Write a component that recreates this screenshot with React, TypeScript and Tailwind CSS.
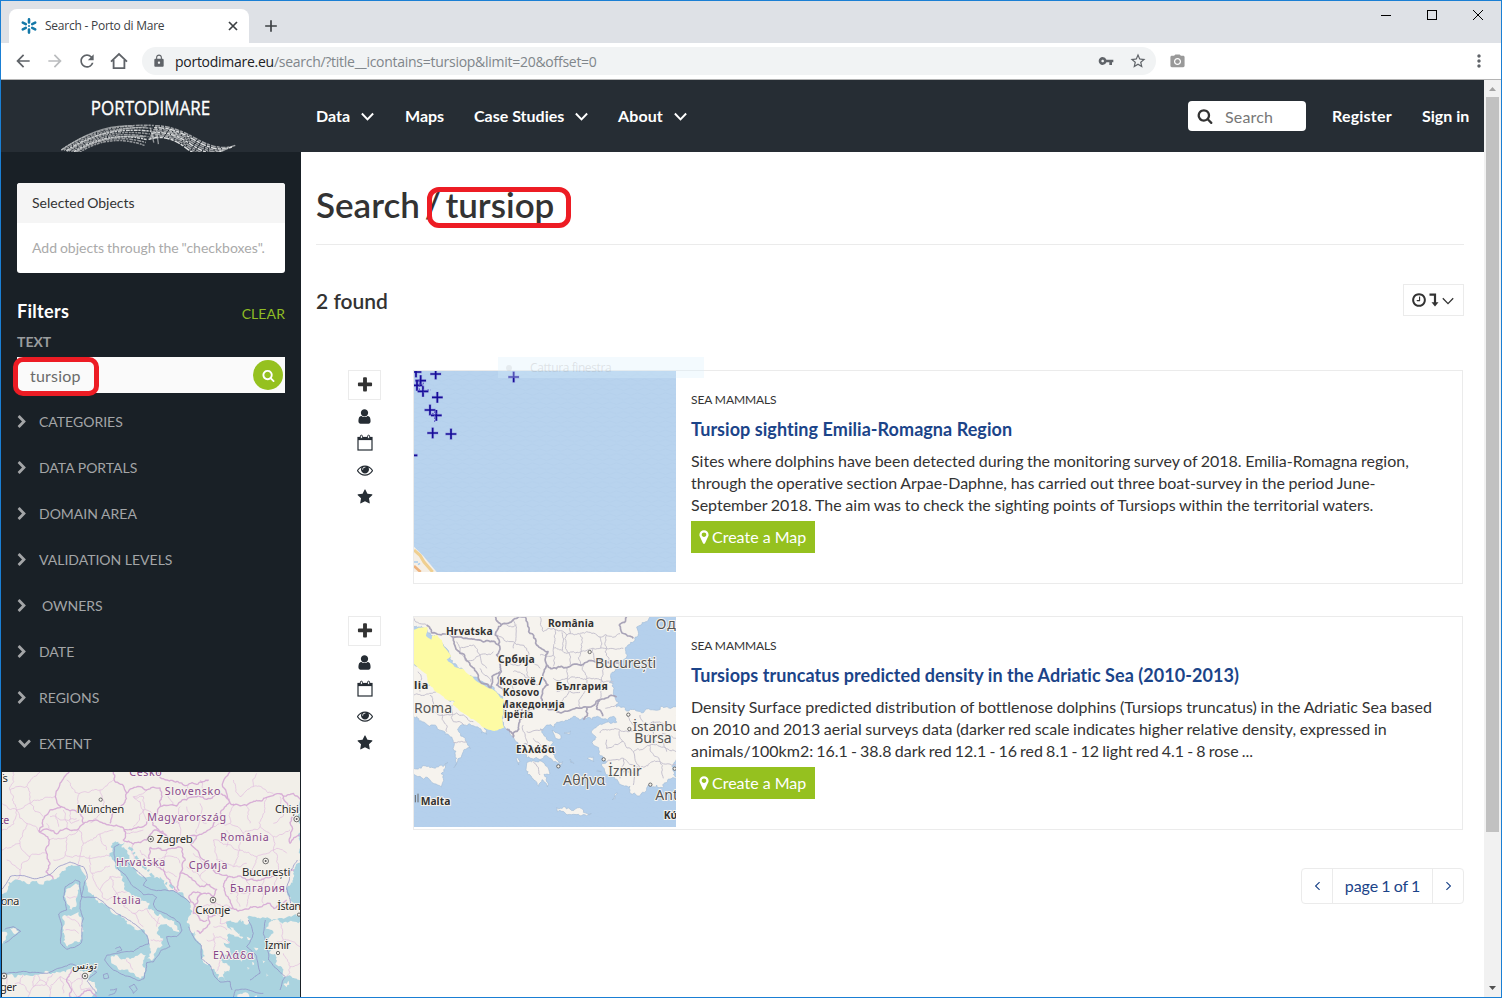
import React from "react";
import {
  MdAdd,
  MdArrowBack,
  MdArrowForward,
  MdLock,
  MdMoreVert,
  MdPhotoCamera,
  MdRefresh,
  MdStarBorder,
  MdVpnKey,
} from "react-icons/md";

/* ---------- icon glyphs ---------- */

const GLYPHS = {
  plus: "M1600 736v192q0 40-28 68t-68 28h-416v416q0 40-28 68t-68 28h-192q-40 0-68-28t-28-68v-416h-416q-40 0-68-28t-28-68v-192q0-40 28-68t68-28h416v-416q0-40 28-68t68-28h192q40 0 68 28t28 68v416h416q40 0 68 28t28 68z",
  user: "M1536 1399q0 109-62.5 187t-150.5 78h-854q-88 0-150.5-78t-62.5-187q0-85 8.5-160.5t31.5-152 58.5-131 94-89 134.5-34.5q131 128 313 128t313-128q76 0 134.5 34.5t94 89 58.5 131 31.5 152 8.5 160.5zm-256-887q0 159-112.5 271.5t-271.5 112.5-271.5-112.5-112.5-271.5 112.5-271.5 271.5-112.5 271.5 112.5 112.5 271.5z",
  eye: "M1664 960q-152-236-381-353 61 104 61 225 0 185-131.5 316.5t-316.5 131.5-316.5-131.5-131.5-316.5q0-121 61-225-229 117-381 353 133 205 333.5 326.5t434.5 121.5 434.5-121.5 333.5-326.5zm-720-384q0-20-14-34t-34-14q-125 0-214.5 89.5t-89.5 214.5q0 20 14 34t34 14 34-14 14-34q0-86 61-147t147-61q20 0 34-14t14-34zm848 384q0 34-20 69-140 230-376.5 368.5t-499.5 138.5-499.5-139-376.5-368q-20-35-20-69t20-69q140-229 376.5-368t499.5-139 499.5 139 376.5 368q20 35 20 69z",
  search:
    "M1216 832q0-185-131.5-316.5t-316.5-131.5-316.5 131.5-131.5 316.5 131.5 316.5 316.5 131.5 316.5-131.5 131.5-316.5zm512 832q0 52-38 90t-90 38q-54 0-90-38l-343-342q-179 124-399 124-143 0-273.5-55.5t-225-150-150-225-55.5-273.5 55.5-273.5 150-225 225-150 273.5-55.5 273.5 55.5 225 150 150 225 55.5 273.5q0 220-124 399l343 343q37 37 37 90z",
  chevron:
    "M1363 877l-742 742q-19 19-45 19t-45-19l-166-166q-19-19-19-45t19-45l531-531-531-531q-19-19-19-45t19-45l166-166q19-19 45-19t45 19l742 742q19 19 19 45t-19 45z",
  star: "M1728 647q0 22-26 48l-363 354 86 500q1 7 1 20 0 21-10.5 35.5t-30.5 14.5q-19 0-40-12l-449-236-449 236q-22 12-40 12-21 0-31.5-14.5t-10.5-35.5q0-6 2-20l86-500-364-354q-25-27-25-48 0-37 56-46l502-73 225-455q19-41 49-41t49 41l225 455 502 73q56 9 56 46z",
  clock:
    "M1024 544v448q0 14-9 23t-23 9h-320q-14 0-23-9t-9-23v-64q0-14 9-23t23-9h224v-352q0-14 9-23t23-9h64q14 0 23 9t9 23zm416 352q0-148-73-273t-198-198-273-73-273 73-198 198-73 273 73 273 198 198 273 73 273-73 198-198 73-273zm224 0q0 209-103 385.5t-279.5 279.5-385.5 103-385.5-103-279.5-279.5-103-385.5 103-385.5 279.5-279.5 385.5-103 385.5 103 279.5 279.5 103 385.5z",
  marker:
    "M1152 640q0-106-75-181t-181-75-181 75-75 181 75 181 181 75 181-75 75-181zm256 0q0 109-33 179l-364 774q-16 33-47.5 52t-67.5 19-67.5-19-46.5-52l-365-774q-33-70-33-179 0-212 150-362t362-150 362 150 150 362z",
};

function Glyph({ name, className }: { name: keyof typeof GLYPHS; className?: string }) {
  return (
    <svg viewBox="0 0 1792 1792" fill="currentColor" className={className}>
      <path d={GLYPHS[name]} />
    </svg>
  );
}

function CalendarIcon({ className }: { className?: string }) {
  return (
    <svg viewBox="0 0 16 17" fill="none" stroke="currentColor" className={className}>
      <rect x="1" y="3.5" width="14" height="12.5" strokeWidth="1.2" />
      <path d="M1 4.8h14" strokeWidth="2.6" />
      <rect x="3.4" y="1.2" width="2" height="3.4" rx="1" fill="#fff" strokeWidth="1" />
      <rect x="10.6" y="1.2" width="2" height="3.4" rx="1" fill="#fff" strokeWidth="1" />
    </svg>
  );
}

function AngleDown({ className, width = 2 }: { className?: string; width?: number }) {
  return (
    <svg viewBox="0 0 12 8" fill="none" stroke="currentColor" strokeWidth={width} className={className}>
      <path d="M0.8 1.2 6 6.6 11.2 1.2" />
    </svg>
  );
}

/* ---------- map geometry ---------- */

type Pt = [number, number];

function parse(src: string): Pt[] {
  return src.split(" ").map((p) => p.split(",").map(Number) as Pt);
}

function noise(a: number, b: number) {
  const s = Math.sin(a * 12.9898 + b * 78.233) * 43758.5453;
  return s - Math.floor(s) - 0.5;
}

function split(a: Pt, b: Pt, amount: number): Pt[] {
  const len = Math.hypot(b[0] - a[0], b[1] - a[1]);
  if (len < 7 || len > 400) return [b];
  const k = (noise(a[0] + b[0], a[1] + b[1]) * amount * Math.min(len, 36)) / len;
  const mid: Pt = [
    (a[0] + b[0]) / 2 - (b[1] - a[1]) * k,
    (a[1] + b[1]) / 2 + (b[0] - a[0]) * k,
  ];
  return [...split(a, mid, amount), ...split(mid, b, amount)];
}

function rough(src: string, amount = 0.45, close = false) {
  const pts = parse(src);
  const out: Pt[] = [pts[0]];
  for (let i = 1; i < pts.length; i++) out.push(...split(pts[i - 1], pts[i], amount));
  return "M" + out.map((p) => p[0].toFixed(1) + " " + p[1].toFixed(1)).join("L") + (close ? "Z" : "");
}

function Lines({ items, stroke, width, opacity = 1, amount = 0.4 }: { items: string[]; stroke: string; width: number; opacity?: number; amount?: number }) {
  return (
    <path d={items.map((s) => rough(s, amount)).join("")} fill="none" stroke={stroke} strokeWidth={width} opacity={opacity} strokeLinejoin="round" />
  );
}

function Land({ items, fill, stroke = "none" }: { items: string[]; fill: string; stroke?: string }) {
  return <path d={items.map((s) => rough(s, 0.6, true)).join("")} fill={fill} stroke={stroke} strokeWidth={2} />;
}

type LabelSpec = { t: string; x: number; y: number; w: number; size?: number; bold?: boolean; color?: string };

function Label({ t, x, y, w, size = 34, bold, color = "#2b2b2b" }: LabelSpec) {
  return (
    <text
      x={x}
      y={y}
      fontSize={size}
      textLength={w}
      fontWeight={bold ? 700 : 400}
      fill={color}
      stroke="#f6f3ee"
      strokeWidth={6}
      strokeLinejoin="round"
      paintOrder="stroke"
      className="font-['Noto_Sans','DejaVu_Sans',sans-serif]"
    >
      {t}
    </text>
  );
}

function Town({ x, y, capital }: { x: number; y: number; capital?: boolean }) {
  return (
    <g fill="#f6f3ee" stroke="#555" strokeWidth={2.5}>
      <circle cx={x} cy={y} r={capital ? 8.5 : 5} />
      {capital && <circle cx={x} cy={y} r={3} fill="#555" stroke="none" />}
    </g>
  );
}

const EXTENT_LAND = [
  "0,30 906,30 906,288 887,318 882,350 864,378 862,405 875,425 906,440 906,466 868,468 845,474 815,484 796,474 765,470 742,472 745,492 722,478 700,486 682,484 690,506 715,520 705,532 682,524 690,548 668,548 690,568 704,590 690,592 668,580 662,600 690,622 688,636 672,632 680,664 664,650 656,660 644,634 630,612 606,600 610,575 598,548 584,524 568,508 566,470 572,436 556,414 528,396 490,366 450,350 410,332 388,300 376,268 364,262 374,246 346,244 332,258 326,290 344,318 362,340 374,380 394,408 420,424 448,428 440,446 462,458 505,480 532,500 538,516 520,512 500,492 478,498 470,520 490,536 488,556 470,568 456,602 442,596 452,566 446,540 426,508 400,500 374,476 346,464 312,432 286,412 264,388 258,352 242,326 205,318 184,336 160,358 130,374 90,372 52,360 24,368 14,398 0,400",
  "228,370 234,400 228,440 214,450 200,430 196,400 210,384",
  "236,456 245,480 240,545 220,548 202,560 190,545 194,490 188,468 212,468",
  "332,590 352,586 390,598 438,586 428,618 432,646 420,656 392,638 352,622 334,610",
  "0,650 60,646 112,644 165,640 206,628 226,624 240,632 262,634 276,640 268,662 288,684 270,716 0,716",
  "906,486 862,488 835,480 806,490 798,506 820,520 804,538 824,556 808,578 830,592 826,612 846,622 850,650 906,656",
  "6,515 22,520 18,538 6,552",
  "30,504 50,504 56,516 40,520",
  "712,704 730,698 770,706 770,716 712,716",
  "582,514 592,526 600,540 590,532",
  "720,478 728,480 724,486",
  "760,560 775,564 768,572",
  "756,606 762,608 758,616",
  "788,600 796,604 790,610",
  "850,672 866,662 860,682",
  "740,530 752,536 744,540",
  "690,500 706,512 730,532 724,536 700,520",
  "720,596 728,600 724,606",
  "742,620 750,624 744,630",
  "800,640 808,646 800,650",
];

const EXTENT_BORDERS = [
  "208,36 180,70 166,110 184,140 150,150 128,180 116,214",
  "116,214 148,210 170,222 196,206 234,208 250,192 238,160 216,150 184,140",
  "116,214 148,240 140,280 150,310 138,336 160,358",
  "250,192 300,186 340,198 372,208 430,200 440,186",
  "340,36 380,100 372,130 352,150 336,170 330,190",
  "380,100 420,80 440,90 480,84 486,110 480,140 456,180 440,186",
  "372,208 370,240 400,252 440,240 470,210 500,228",
  "480,140 530,138 570,112 620,118 660,100 690,128 650,180 625,210 590,228 540,240 500,228 470,204 456,180",
  "690,128 668,80 690,36",
  "690,128 740,136 800,112 850,108 880,150 876,200 870,250 900,225",
  "850,108 880,100 900,118",
  "590,228 572,250 600,290 640,330 685,350 740,360 800,352 862,336 882,330",
  "450,262 500,270 546,264 556,300 540,340 538,392",
  "450,262 446,286 470,320 510,360 532,396",
  "540,340 570,352 600,380 620,372 650,388 640,410 606,402 580,396 566,410",
  "685,350 670,380 690,420 700,446 760,440 810,430 822,446 860,420",
  "700,446 660,456 626,470 622,500 600,520 590,512",
  "566,410 584,438 606,402",
  "626,470 606,440 584,438 580,460 600,480 622,480",
  "626,60 560,76 500,60 470,36",
  "290,711 270,690 210,711 215,690 200,660 214,628",
];

const EXTENT_REGIONS = [
  "6,130 50,150 90,130 130,170", "40,36 30,90 50,150 30,200 6,210", "50,150 80,190 116,214",
  "80,190 60,250 90,290 140,280", "6,270 60,250", "20,300 60,330 90,290", "60,330 52,360",
  "90,130 80,80 120,36", "80,80 30,90", "90,130 166,110", "200,60 240,100 230,150",
  "240,100 300,90 340,60", "300,90 310,140 270,190", "148,240 200,232 236,208", "200,232 196,284 160,300",
  "196,284 240,288 330,284", "236,208 250,250 240,288", "250,250 300,222 340,210", "300,222 320,270",
  "240,288 232,316", "270,286 276,340 330,318", "276,340 300,390 330,350 362,352", "330,350 350,400 380,396",
  "300,390 320,420 350,400", "350,400 372,440 410,424", "372,440 400,460 440,446", "400,460 430,500",
  "440,446 480,490", "480,470 470,500", "452,540 488,540", "380,598 400,630",
  "400,110 430,150 400,200", "430,150 456,160", "400,110 440,90", "500,100 520,138",
  "560,76 560,112", "600,60 610,116", "560,140 580,180 620,190", "520,190 560,180", "540,140 540,240",
  "500,170 540,190", "600,130 590,220", "700,130 690,190 730,220 780,200 820,230 870,210",
  "740,136 750,190", "800,112 780,200", "690,190 640,200", "730,220 720,270 770,290 820,270 860,280",
  "640,240 720,270 700,320", "770,290 760,356", "820,230 820,270 830,340", "640,240 650,300 700,320 740,310",
  "680,210 680,260", "840,110 850,160 820,190", "700,60 720,110 760,80 820,100", "760,80 770,40",
  "470,300 520,290 540,310", "500,270 490,330 530,350", "580,280 620,310 600,350", "620,310 650,330",
  "560,320 600,350 620,370", "700,360 720,440", "740,360 750,400 740,440", "790,356 790,430", "830,350 830,400",
  "690,400 750,400 860,395", "606,440 650,430 690,440", "640,410 650,456", "640,500 680,510",
  "620,540 660,530 690,548", "640,520 640,580", "650,456 660,490 680,484", "590,420 600,402",
  "660,600 650,634", "840,490 850,540 900,560", "850,540 820,560", "850,580 870,620 900,610", "870,620 860,650",
  "20,650 30,690 60,670 90,700 120,660 150,690 180,650 214,670 250,650",
  "60,670 70,644", "120,660 112,644", "150,690 150,711", "90,700 84,711", "180,650 190,700",
  "214,670 230,711", "240,640 244,690 280,690", "30,690 6,690", "105,644 100,680 140,670 160,642",
  "170,160 176,200", "190,150 200,204", "210,152 214,190 238,180", "150,170 180,180 230,176", "140,190 160,212",
  "200,470 240,500", "196,510 236,520", "200,410 230,410", "440,180 430,110 400,110", "376,220 430,210",
  "400,252 396,280 440,330", "420,270 460,310",
];

const SEA_LIMITS = [
  "6,388 30,350 60,346 110,356 150,344 180,318 210,306 250,320 262,352 250,380 244,410 290,412 340,450 400,490 440,526 446,552 420,560 400,575 370,576",
  "196,380 226,360 240,366 246,410 240,446 250,476 244,548 224,562 200,568 182,550 186,500 176,462 200,450 190,410 196,380",
  "370,576 350,580 320,586 314,600 340,630 390,650 416,662 432,656 440,608 460,606 484,570 510,560 500,530 530,530 546,510 540,490 500,462 470,450 460,432 470,412 458,404 430,404 400,380 380,350 356,330 344,300 342,262 358,252",
  "372,300 420,340 440,360 430,376 470,392 520,392 560,418 570,430",
  "566,500 586,540 604,556 604,596 632,618 644,650 660,666 690,664 696,690",
  "6,640 70,634 140,640 200,618 212,612 250,622 290,636 270,652 262,664 290,700",
  "346,566 360,560 366,570 350,576",
  "310,644 322,640 326,654 312,656 310,644",
  "388,680 402,672 412,688 400,700 388,680",
  "330,690 350,686 344,700 326,706",
  "700,711 706,690 740,688 790,700",
  "892,300 874,330 868,360 860,384 872,430",
  "796,480 790,520 800,560 806,600 834,630 856,650 840,690",
  "745,480 760,520 740,560 770,590 780,640 750,660",
  "14,508 40,500 62,514 40,530 14,550",
];

function ExtentMap() {
  return (
    <svg viewBox="6 36 894 675" className="block h-[225px] w-[298px]">
      <rect x="0" y="0" width="910" height="720" fill="#aad3df" />
      <Land items={EXTENT_LAND} fill="#f2efe9" />
      <Lines items={EXTENT_REGIONS} stroke="#e2bfe0" width={2.2} />
      <Lines items={EXTENT_BORDERS} stroke="#d3a3d3" width={4} opacity={0.85} />
      <Lines items={SEA_LIMITS} stroke="#8f8fc6" width={3} opacity={0.75} amount={0.15} />
      <path d={rough("386,262 408,290 430,320 480,356 520,384", 0.3)} fill="none" stroke="#aad3df" strokeWidth={8} strokeDasharray="16 6 5 8" />
      <Town x={302} y={119} />
      <Town x={452} y={237} capital />
      <Town x={797} y={303} capital />
      <Town x={639} y={420} capital />
      <Town x={890} y={177} capital />
      <Town x={255} y={648} capital />
      <Town x={12} y={648} capital />
      <Town x={834} y={579} />
      <Town x={897} y={464} />
      <Label t="Česko" x={388} y={49} w={97} color="#86478a" size={32} />
      <Label t="Slovensko" x={494} y={106} w={167} color="#86478a" size={32} />
      <Label t="Magyarország" x={442} y={183} w={236} color="#86478a" size={32} />
      <Label t="România" x={661} y={242} w={145} color="#86478a" size={32} />
      <Label t="Hrvatska" x={348} y={318} w={148} color="#86478a" size={32} />
      <Label t="Србија" x={566} y={327} w={116} color="#86478a" size={32} />
      <Label t="България" x={690} y={396} w={165} color="#86478a" size={32} />
      <Label t="Italia" x={338} y={431} w={84} color="#86478a" size={32} />
      <Label t="Ελλάδα" x={639} y={596} w={122} color="#86478a" size={32} />
      <Label t="ce" x={-4} y={192} w={32} color="#86478a" size={32} />
      <Label t="München" x={230} y={159} w={143} />
      <Label t="Zagreb" x={470} y={250} w={108} />
      <Label t="București" x={726} y={348} w={145} />
      <Label t="Скопје" x={586} y={462} w={105} />
      <Label t="Chiși" x={825} y={159} w={72} />
      <Label t="İstan" x={832} y={451} w={72} />
      <Label t="İzmir" x={794} y={567} w={78} />
      <Label t="is" x={6} y={66} w={18} />
      <Label t="ona" x={2} y={434} w={56} />
      <Label t="ger" x={0} y={692} w={50} />
      <Label t="تونس" x={216} y={628} w={76} size={32} />
    </svg>
  );
}

const CROSSES: Pt[] = [
  [228, 66], [287, 72], [242, 92], [231, 106], [249, 124], [292, 142],
  [270, 180], [289, 196], [278, 249], [333, 252], [521, 81], [216, 316],
];

function SightingMap() {
  return (
    <svg viewBox="222 63 786 603" className="block h-[201px] w-[262px]">
      <defs>
        <pattern id="ripples" width="42" height="28" patternUnits="userSpaceOnUse">
          <path d="M0 6q10 7 21 0t21 0M-21 20q10 7 21 0t21 0 21 0" fill="none" stroke="#b0cce9" strokeWidth="2" />
        </pattern>
      </defs>
      <rect x="222" y="63" width="786" height="603" fill="#b8d3ee" />
      <rect x="222" y="63" width="786" height="603" fill="url(#ripples)" opacity="0.7" />
      <path d="M222 590 250 618 290 666H222Z" fill="#f5efe6" />
      <path d="M222 600 240 616 252 636 278 666" fill="none" stroke="#efcf90" strokeWidth="9" />
      <path d="M222 648 242 666" stroke="#eeb27c" strokeWidth="8" />
      <path d="M222 636h12M234 644l6-4" stroke="#a9cdee" strokeWidth="5" />
      {CROSSES.map(([x, y]) => (
        <g key={x + "-" + y} fill="none">
          <path d={`M${x - 17} ${y}h34M${x} ${y - 17}v34`} stroke="#8b86dd" strokeWidth="9" opacity="0.55" />
          <path d={`M${x - 16} ${y}h32M${x} ${y - 16}v32`} stroke="#160c98" strokeWidth="5" />
        </g>
      ))}
      <path d="M238 88v36M250 98v30M262 120h10M284 184v34M276 190h16" stroke="#5a50c0" strokeWidth="3" strokeDasharray="5 4" />
    </svg>
  );
}

const DENSITY_LAND = [
  "216,30 930,30 914,52 890,66 894,92 872,112 856,128 862,150 850,166 826,196 808,232 822,250 820,272 836,292 830,306 860,318 905,324 950,316 1014,286 1014,530 985,522 968,548 950,540 925,540 916,560 890,572 872,566 870,544 838,538 820,516 796,504 784,480 800,470 780,452 776,428 756,412 764,392 756,376 790,356 830,352 812,336 790,342 772,334 756,344 740,340 700,334 676,346 650,352 644,366 620,360 600,372 612,392 640,414 634,428 610,422 640,448 668,470 660,484 640,470 604,462 572,460 552,444 534,426 524,404 510,386 494,366 488,330 490,296 470,262 440,236 400,216 350,180 330,150 300,110 276,92 262,80 244,64 216,70",
  "216,170 262,200 270,230 300,262 330,290 352,300 394,318 420,344 432,366 440,388 424,384 404,364 372,360 356,380 376,400 392,430 370,440 352,472 342,488 346,450 340,410 316,388 280,360 258,356 216,324",
  "216,488 250,482 290,486 324,472 310,520 304,546 282,536 240,514 216,510",
  "560,476 590,470 620,484 630,506 612,508 620,530 622,546 606,524 596,544 576,520 558,494",
  "650,608 690,612 730,622 754,626 740,632 700,628 652,620",
  "672,384 692,378 690,388", "742,460 760,456 762,470", "690,462 702,476 692,470",
  "816,584 832,564 826,580", "702,512 716,520 706,526", "636,376 656,386 662,402 644,392",
  "528,460 540,468 536,480", "770,498 784,500", "756,532 770,528 762,536",
];

const DENSITY_BORDERS = [
  "260,60 276,84 320,88 338,96 342,116 372,148 404,196 430,236 452,250 456,214 480,200",
  "338,96 390,102 450,110 476,120 470,150 484,200 470,240 492,262",
  "476,120 466,90 484,60 466,36", "484,60 520,44 556,36",
  "556,36 566,80 590,120 624,140 620,180 680,188 730,178 780,168 846,172",
  "620,180 610,220 624,240 606,270 610,296 650,320 700,312 740,306 780,284 830,276",
  "610,296 560,320 540,344 520,396 500,372", "540,344 548,310 492,296", "740,306 742,332 730,344",
  "860,36 838,60 846,84 880,100", "780,284 770,312 788,334",
];

const DENSITY_REGIONS = [
  "470,90 520,110 560,130", "520,44 528,90 520,130", "476,160 520,180 560,170 600,190", "560,130 560,170 570,220",
  "600,36 610,80 640,70 680,90 740,80 780,96 840,86", "640,70 640,130 700,140 760,130 850,130", "680,90 690,180",
  "720,88 724,138", "724,138 720,180", "760,130 770,170", "800,90 800,130 810,170", "640,130 640,184", "666,82 668,136",
  "780,96 782,130", "700,40 690,88", "350,110 360,130 400,120 420,150 460,140", "360,130 380,170 420,150 440,190",
  "420,190 452,230", "640,220 700,216 760,220 820,230", "680,188 690,250 660,300", "730,178 740,250 720,306",
  "790,170 780,280", "650,260 720,262", "222,230 270,240", "222,270 290,260", "270,270 280,320 330,330 370,330 400,350",
  "310,320 320,380", "336,300 340,350 372,360", "234,200 240,260", "340,412 380,410",
  "550,360 560,420", "560,380 610,376", "544,420 600,430", "580,400 620,440", "580,470 600,510",
  "860,330 880,360 940,350 1008,370", "780,384 840,376 900,390 1008,400", "800,430 850,410 880,440 930,420 1008,440",
  "850,410 840,376", "800,470 850,460 900,490 960,470 1008,480", "880,440 900,490 880,540", "930,420 960,470 970,520",
  "850,460 840,520", "800,404 800,430", "940,350 950,410", "840,500 900,510", "520,200 570,220 600,240", "516,230 520,270",
  "500,60 530,60", "222,40 260,60", "600,150 640,150", "900,330 910,350", "796,310 830,300", "960,400 980,440",
];

function DensityMap() {
  return (
    <svg viewBox="222 36 786 630" className="block h-[210px] w-[262px]">
      <rect x="222" y="36" width="786" height="630" fill="#b5d0ec" />
      <rect x="222" y="36" width="786" height="630" fill="url(#ripples)" opacity="0.4" />
      <Land items={DENSITY_LAND} fill="#f6f3ee" stroke="#a3bcd8" />
      <Lines items={DENSITY_REGIONS} stroke="#c6c2cf" width={3} />
      <Lines items={DENSITY_BORDERS} stroke="#a9a4b8" width={5} />
      <Town x={749} y={141} />
      <Town x={865} y={329} />
      <Town x={868} y={372} />
      <Town x={791} y={463} />
      <Town x={655} y={484} />
      <Town x={931} y={539} />
      <Town x={1004} y={491} />
      <Label t="Hrvatska" x={318} y={91} w={140} size={31} bold color="#333" />
      <Label t="România" x={624} y={66} w={138} size={31} bold color="#333" />
      <Label t="Србија" x={474} y={173} w={110} size={31} bold color="#333" />
      <Label t="Kosovë /" x={478} y={240} w={130} size={30} bold color="#333" />
      <Label t="Kosovo" x={488} y={272} w={110} size={30} bold color="#333" />
      <Label t="България" x={647} y={255} w={156} size={31} bold color="#333" />
      <Label t="Македонија" x={478} y={310} w={196} size={30} bold color="#333" />
      <Label t="ipëria" x={492} y={339} w={88} size={30} bold color="#333" />
      <Label t="Ελλάδα" x={528} y={445} w={116} size={31} bold color="#333" />
      <Label t="Malta" x={242} y={599} w={89} size={31} bold color="#333" />
      <Label t="Κύ" x={971} y={643} w={40} size={31} bold color="#333" />
      <Label t="lia" x={222} y={252} w={43} size={34} bold color="#333" />
      <Label t="București" x={765} y={189} w={183} size={42} color="#555" />
      <Label t="Од" x={947} y={71} w={60} size={42} color="#555" />
      <Label t="Roma" x={222} y={323} w={114} size={42} color="#555" />
      <Label t="İstanbu" x={878} y={378} w={144} size={40} color="#555" />
      <Label t="Bursa" x={883} y={414} w={112} size={42} color="#555" />
      <Label t="İzmir" x={805} y={513} w={100} size={41} color="#555" />
      <Label t="Αθήνα" x={669} y={541} w={127} size={42} color="#555" />
      <Label t="Ant" x={946} y={585} w={68} size={42} color="#555" />
      <path d="M226 570v22M234 566v26" stroke="#666" strokeWidth="3" />
      <path
        d={rough("222,74 262,66 262,78 258,92 274,104 276,92 292,90 306,106 312,126 334,154 320,164 344,186 372,194 400,218 424,238 456,252 478,274 492,284 488,350 492,368 464,378 440,372 420,358 390,340 362,320 338,300 344,288 316,282 290,262 268,240 260,208 222,176", 0.2, true)}
        fill="#fdfba4"
      />
    </svg>
  );
}

/* ---------- brand ---------- */

function lerp(a: number, b: number, t: number) {
  return a + (b - a) * t;
}

const WAVE_LEFT = Array.from({ length: 8 }, (_, i) => {
  const t = i / 7;
  return `M${lerp(183, 236, t)} ${lerp(450, 458, t)}Q${lerp(300, 330, t)} ${lerp(368, 398, t)} ${lerp(462, 434, t)} ${lerp(376, 436, t)}`;
});

const WAVE_RIGHT = Array.from({ length: 8 }, (_, i) => {
  const t = i / 7;
  return `M${lerp(466, 446, t)} ${lerp(377, 418, t)}Q${lerp(520, 500, t)} ${lerp(376, 398, t)} ${lerp(590, 560, t)} ${lerp(416, 444, t)}T${lerp(708, 640, t)} ${lerp(436, 462, t)}`;
});

function BrandLogo() {
  return (
    <svg viewBox="180 290 535 166" className="block h-[55px] w-[178px]">
      <text x="272" y="345" fontSize="59" textLength="360" lengthAdjust="spacingAndGlyphs" fill="#fff" stroke="#fff" strokeWidth="1" className="font-['Open_Sans',sans-serif] font-normal">
        PORTODIMARE
      </text>
      <g fill="none" strokeWidth="4.6">
        {WAVE_LEFT.map((d, i) => (
          <path key={d} d={d} stroke={i % 3 === 2 ? "#d2d4d5" : "#989b9e"} strokeDasharray={i % 2 ? "9 3 6 2" : "12 2 7 3"} />
        ))}
        {WAVE_RIGHT.map((d, i) => (
          <path key={d} d={d} stroke={i % 3 === 1 ? "#dcdedf" : "#a0a3a6"} strokeDasharray={i % 2 ? "10 3 18 3" : "15 3 9 3"} />
        ))}
      </g>
      <g fill="none" stroke="#c2c4c6" strokeWidth="4" opacity="0.7">
        <path d="M183 450Q300 368 400 378M200 454Q300 384 440 380M225 456Q310 400 434 410M520 388 545 420M505 384 532 416M468 378 476 432M452 384 462 428" />
      </g>
    </svg>
  );
}

/* ---------- browser chrome ---------- */

function Favicon() {
  return (
    <svg viewBox="0 0 16 16" className="size-4" stroke="#1378a8" strokeWidth="2.6" strokeLinecap="round">
      <path d="M8 1.4v3M8 11.6v3M1.800 4.600l3 1.500M11.2 9.900l3 1.500M1.800 11.400l3-1.500M11.2 6.100l3-1.500" />
      <circle cx="8" cy="8" r="1" fill="#1378a8" stroke="none" />
    </svg>
  );
}

function TabStrip() {
  return (
    <div className="flex h-[42px] shrink-0 bg-[#dee1e6] pl-2 pt-2">
      <div className="flex h-[34px] w-60 items-center rounded-t-lg bg-white pl-3 pr-[11px]">
        <Favicon />
        <span className="ml-2 flex-1 whitespace-nowrap font-['Open_Sans',sans-serif] text-[12px] tracking-[-0.24px] text-[#3c4043]">Search - Porto di Mare</span>
        <svg viewBox="0 0 10 10" className="size-[10px]" stroke="#3c4043" strokeWidth="1.7">
          <path d="M1 1 9 9M9 1 1 9" />
        </svg>
      </div>
      <MdAdd className="ml-[12px] mt-[7px] size-5 text-[#3c4043]" />
      <div className="ml-auto flex items-start gap-9 pr-[18px] pt-[1px]">
        <svg viewBox="0 0 10 10" className="size-[10px]" stroke="#000"><path d="M0 5.500h10" /></svg>
        <svg viewBox="0 0 10 10" className="size-[10px]" stroke="#000" fill="none"><rect x="0.5" y="0.5" width="9" height="9" /></svg>
        <svg viewBox="0 0 10 10" className="size-[10px]" stroke="#000"><path d="M0 0 10 10M10 0 0 10" /></svg>
      </div>
    </div>
  );
}

function Toolbar() {
  return (
    <div className="flex h-[37px] shrink-0 items-center border-b border-[#b4b4b4] bg-white pl-3">
      <MdArrowBack className="size-5 text-[#5f6368]" />
      <MdArrowForward className="ml-3 size-5 text-[#babcbe]" />
      <MdRefresh className="ml-3 size-5 text-[#5f6368]" />
      <svg viewBox="0 0 20 20" className="ml-3 size-5" fill="none" stroke="#5f6368" strokeWidth="1.8">
        <path d="M2 10.6 10 3l8 7.6M4.6 9v8.2h10.8V9" />
      </svg>
      <div className="ml-[13px] flex h-7 w-[1014px] items-center rounded-full bg-[#f1f3f4] pl-[10px] pr-[9px]">
        <MdLock className="size-[14px] text-[#5f6368]" />
        <span className="ml-[9px] flex-1 whitespace-nowrap font-['Open_Sans',sans-serif] text-[14px] tracking-[-0.27px] text-[#80868b]">
          <span className="text-[#202124]">portodimare.eu</span>/search/?title__icontains=tursiop&amp;limit=20&amp;offset=0
        </span>
        <MdVpnKey className="size-4 text-[#5f6368]" />
        <MdStarBorder className="ml-[15px] size-[18px] text-[#5f6368]" />
      </div>
      <MdPhotoCamera className="ml-[13px] size-[17px] text-[#999]" />
      <MdMoreVert className="ml-auto mr-[12px] size-5 text-[#5f6368]" />
    </div>
  );
}

function Scrollbar() {
  return (
    <div className="flex w-[17px] shrink-0 flex-col items-center bg-[#f1f1f1]">
      <svg viewBox="0 0 17 17" className="size-[17px]"><path d="M5 11h7L8.5 7z" fill="#a3a3a3" /></svg>
      <div className="h-[735px] w-[13px] bg-[#c1c1c1]" />
      <svg viewBox="0 0 17 17" className="mt-auto size-[17px]"><path d="M5 6h7L8.500 10z" fill="#505050" /></svg>
    </div>
  );
}

/* ---------- page ---------- */

function NavItem({ label, menu, className }: { label: string; menu?: boolean; className: string }) {
  return (
    <a className={"flex items-center whitespace-nowrap " + className}>
      {label}
      {menu && <AngleDown className="ml-[11px] h-[9px] w-[13px]" width={1.8} />}
    </a>
  );
}

function Header() {
  return (
    <header className="flex h-[72px] shrink-0 items-center bg-[#262d34] text-[16px] font-bold text-white">
      <div className="w-[315px] self-stretch pl-[59px] pt-[17px]">
        <BrandLogo />
      </div>
      <NavItem label="Data" menu className="w-[89px]" />
      <NavItem label="Maps" className="w-[69px]" />
      <NavItem label="Case Studies" menu className="w-[144px]" />
      <NavItem label="About" menu className="tracking-[0.1px]" />
      <div className="ml-auto flex h-[30px] w-[118px] items-center rounded-[4px] bg-white pl-[9px] font-normal text-[#777]">
        <Glyph name="search" className="size-4 text-[#333]" />
        <span className="ml-3 pt-0.5 tracking-[0.15px]">Search</span>
      </div>
      <a className="ml-[26px] w-[90px] tracking-[0.2px]">Register</a>
      <a className="w-[62px] whitespace-nowrap">Sign in</a>
    </header>
  );
}

const FACETS = ["CATEGORIES", "DATA PORTALS", "DOMAIN AREA", "VALIDATION LEVELS", "OWNERS", "DATE", "REGIONS", "EXTENT"];

function Sidebar() {
  return (
    <aside className="flex w-[300px] shrink-0 flex-col bg-[#192026] pt-[31px] text-[14px]">
      <div className="mx-4 h-[90px] shrink-0 overflow-hidden rounded-[3px] bg-white">
        <div className="h-10 bg-[#f5f5f5] pl-[15px] leading-[40px] text-[#333] [word-spacing:-1px]">Selected Objects</div>
        <div className="whitespace-nowrap pl-[15px] leading-[50px] text-[#aaa] [word-spacing:-0.7px]">Add objects through the "checkboxes".</div>
      </div>
      <div className="mx-4 mt-[24px] flex h-7 shrink-0 items-center justify-between">
        <h4 className="text-[18px] font-bold tracking-[0.3px] text-white">Filters</h4>
        <a className="pt-[5px] tracking-[0.1px] text-[#8fbc24]">CLEAR</a>
      </div>
      <div className="mx-4 mt-[7px] h-5 shrink-0 leading-[20px] font-bold text-[#9a9d9f]">TEXT</div>
      <div className="relative mx-4 mt-[5px] flex h-9 shrink-0 items-center justify-between bg-[#fafafa] pl-[13px] pr-[2px] text-[16px] text-[#6b6b6b]">
        <span className="pt-px tracking-[0.2px]">tursiop</span>
        <span className="flex size-[30px] items-center justify-center rounded-full bg-[#95c11f] text-white">
          <Glyph name="search" className="size-[13px]" />
        </span>
        <span className="absolute -left-1 top-0 h-[39px] w-[86px] rounded-[10px] border-5 border-[#ed1c24]" />
      </div>
      <ul className="mt-[6px] shrink-0">
        {FACETS.map((f) => (
          <li key={f} className="flex h-[46px] items-center pl-[14px] text-[#a3a5a7]">
            <Glyph name="chevron" className={"size-[14px] shrink-0 " + (f === "EXTENT" ? "ml-[2px] mr-[-2px] rotate-90" : "")} />
            <span className={f === "OWNERS" ? "ml-[13px] pb-0.5" : "ml-[10px] pb-0.5"}>{f}</span>
          </li>
        ))}
      </ul>
      <div className="mt-[5px] pl-px">
        <ExtentMap />
      </div>
    </aside>
  );
}

type Line = { text: string; spacing: string };
type Entry = { title: string; lines: Line[]; map: React.ReactNode };

const RESULTS: Entry[] = [
  {
    title: "Tursiop sighting Emilia-Romagna Region",
    lines: [
      { text: "Sites where dolphins have been detected during the monitoring survey of 2018. Emilia-Romagna region,", spacing: "[word-spacing:-0.6px]" },
      { text: "through the operative section Arpae-Daphne, has carried out three boat-survey in the period June-", spacing: "[word-spacing:-0.45px]" },
      { text: "September 2018. The aim was to check the sighting points of Tursiops within the territorial waters.", spacing: "[word-spacing:-0.4px]" },
    ],
    map: <SightingMap />,
  },
  {
    title: "Tursiops truncatus predicted density in the Adriatic Sea (2010-2013)",
    lines: [
      { text: "Density Surface predicted distribution of bottlenose dolphins (Tursiops truncatus) in the Adriatic Sea based", spacing: "[word-spacing:-0.25px]" },
      { text: "on 2010 and 2013 aerial surveys data (darker red scale indicates higher relative density, expressed in", spacing: "[word-spacing:-0.4px]" },
      { text: "animals/100km2: 16.1 - 38.8 dark red 12.1 - 16 red 8.1 - 12 light red 4.1 - 8 rose ...", spacing: "[word-spacing:-1px]" },
    ],
    map: <DensityMap />,
  },
];

function ResultRow({ entry }: { entry: Entry }) {
  return (
    <article className="mb-8 flex h-[214px]">
      <div className="ml-8 flex w-[33px] shrink-0 flex-col items-center text-[#262d34]">
        <div className="flex h-[30px] w-[33px] items-center justify-center border border-[#ebebeb] text-[#333]">
          <Glyph name="plus" className="size-[18px]" />
        </div>
        <Glyph name="user" className="mt-[8px] size-[17px]" />
        <CalendarIcon className="mt-[9px] h-[17px] w-4" />
        <Glyph name="eye" className="mt-[11px] size-4" />
        <Glyph name="star" className="mt-[11px] size-4" />
      </div>
      <div className="ml-8 flex w-[1050px] border border-[#ebebeb]">
        {entry.map}
        <div className="ml-[15px] whitespace-nowrap pt-[21px]">
          <div className="text-[12px] leading-[16px] tracking-[-0.1px] text-[#333]">SEA MAMMALS</div>
          <h4 className="mt-[9px] text-[18px] font-bold leading-[24px] tracking-[0.05px] text-[#1b4489]">{entry.title}</h4>
          <p className="mt-[9px] text-[16px] leading-[22px] text-[#333]">
            {entry.lines.map((l) => (
              <span key={l.text} className={"block " + l.spacing}>{l.text}</span>
            ))}
          </p>
          <a className="mt-[5px] flex h-8 w-[124px] items-center bg-[#95c11f] pl-[5px] text-[16px] text-white">
            <Glyph name="marker" className="size-4" />
            <span>Create a Map</span>
          </a>
        </div>
      </div>
    </article>
  );
}

function Results() {
  return (
    <main className="relative flex-1 bg-white px-[15px]">
      <h1 className="relative h-[93px] w-[1148px] border-b border-[#ebebeb] pt-[29px] text-[35px] font-semibold leading-[46px] text-[#333] [word-spacing:-4px]">
        Search / tursiop
        <span className="absolute left-[111px] top-[35px] h-[41px] w-[144px] rounded-[12px] border-5 border-[#ed1c24]" />
      </h1>
      <div className="mt-[39px] flex h-8 w-[1148px] items-center justify-between">
        <h3 className="pt-0.5 text-[21px] font-semibold text-[#333]">2 found</h3>
        <div className="flex h-8 w-[61px] items-center border border-[#ebebeb] pl-[7px] text-[#333]">
          <Glyph name="clock" className="size-4" />
          <svg viewBox="0 0 10 14" className="ml-[2px] h-[14px] w-[10px]" fill="none" stroke="currentColor" strokeWidth="2.2">
            <path d="M0.500 1.600h5.500v9" />
            <path d="M2.500 9.200h7L6 13.400z" fill="currentColor" stroke="none" />
          </svg>
          <AngleDown className="ml-[3px] mt-px h-[8px] w-[12px]" width={1.3} />
        </div>
      </div>
      <section className="mt-[54px]">
        {RESULTS.map((r) => (
          <ResultRow key={r.title} entry={r} />
        ))}
      </section>
      <nav className="ml-auto mr-[5px] mt-[38px] flex h-9 w-[163px] items-stretch divide-x divide-[#ebebeb] rounded-[4px] border border-[#ebebeb] text-[16px] text-[#1b4489]">
        <span className="flex w-[31px] items-center justify-center">
          <AngleDown className="h-[6px] w-[9px] rotate-90" width={1.5} />
        </span>
        <span className="flex flex-1 items-center justify-center whitespace-nowrap [word-spacing:-1px]">page 1 of 1</span>
        <span className="flex w-[30px] items-center justify-center">
          <AngleDown className="h-[6px] w-[9px] -rotate-90" width={1.5} />
        </span>
      </nav>
      <div className="absolute left-[197px] top-[205px] flex h-[21px] w-[206px] items-center bg-[#d7effc]/30 pl-2 font-['Open_Sans',sans-serif] text-[12px] tracking-[-0.4px] text-[#999]/25">
        <span className="size-[6px] rounded-full bg-[#999]/15" />
        <span className="ml-[18px]">Cattura finestra</span>
      </div>
    </main>
  );
}

export default function App() {
  return (
    <div className="h-[998px] w-[1509px] overflow-hidden bg-white">
      <div className="flex h-[998px] w-[1502px] flex-col overflow-hidden border border-[#1a7fd4] font-['Lato',sans-serif] [font-variant-ligatures:none]">
        <TabStrip />
        <Toolbar />
        <div className="flex min-h-0 flex-1">
          <div className="flex min-w-0 flex-1 flex-col">
            <Header />
            <div className="flex min-h-0 flex-1 overflow-hidden">
              <Sidebar />
              <Results />
            </div>
          </div>
          <Scrollbar />
        </div>
      </div>
    </div>
  );
}
